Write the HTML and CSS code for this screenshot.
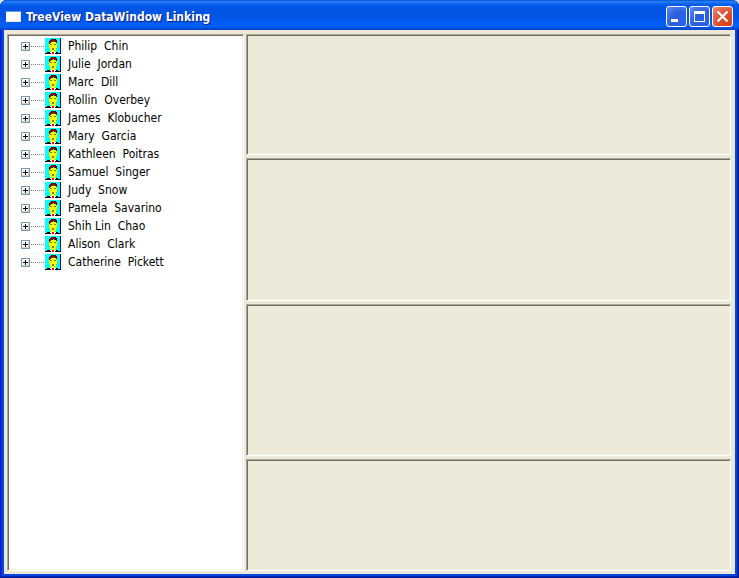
FILE: index.html
```
<!DOCTYPE html>
<html lang="en">
<head>
    <meta charset="UTF-8">
    <meta name="viewport" content="width=device-width, initial-scale=1.0">
    <title>TreeView DataWindow Linking</title>
    <link rel="stylesheet" href="styles.css">
</head>
<body>
    <!-- Shared icons -->
    <svg class="sprites" width="0" height="0" aria-hidden="true">
        <symbol id="person" viewBox="0 0 16 16">
            <path fill="#00ffff" d="M0 0h16v16H0z"/>
            <path fill="#000080" d="M15 0h1v16h-1z"/>
            <path fill="#ffff00" d="M4 4h8v6h-1v3h-1v1H6v-1H5v-3H4z"/>
            <path fill="#800000" d="M6 1h5v1h1v3h-1V4H9V3H8v1H6v1H5v1H4V3h1V2h1z"/>
            <path fill="#808000" d="M5 6h2v1H5zM9 6h2v1H9zM7 10h2v2H7z"/>
            <path fill="#000" d="M2 14h3v1h1v1H0v-1h2zM11 14h2v1h2v1h-5v-1h1z"/>
            <path fill="#fff" d="M5 14h6v1h-1v1H6v-1H5z"/>
            <path fill="#ff0000" d="M7 14h2v2H7z"/>
        </symbol>
        <symbol id="plus" viewBox="0 0 9 9">
            <path fill="#7898b5" d="M0 0h9v9H0z"/>
            <path fill="#fff" d="M1 1h7v7H1z"/>
            <path fill="#d6d2c2" d="M1 7h6V2h1v6H1z"/>
            <path fill="#000" d="M4 2h1v2h2v1H5v2H4V5H2V4h2z"/>
        </symbol>
    </svg>

    <div class="window">
        <header class="title-bar">
            <svg class="app-icon" width="16" height="12" viewBox="0 0 16 12" aria-hidden="true">
                <path fill="#fff" d="M0 0h15v11H0z"/>
                <path fill="#5f9ee8" d="M0 0h15v1H0z"/>
                <path fill="#ece9d8" d="M1 10h13V2h1v9H1z"/>
                <path fill="#e07050" d="M13 0h1v1h-1z"/>
            </svg>
            <h1>TreeView DataWindow Linking</h1>
            <div class="controls">
                <button class="control" type="button" aria-label="Minimize">
                    <svg width="19" height="19" viewBox="0 0 19 19"><path fill="#fff" d="M4 12h7v3H4z"/></svg>
                </button>
                <button class="control" type="button" aria-label="Maximize">
                    <svg width="19" height="19" viewBox="0 0 19 19"><path fill="#fff" fill-rule="evenodd" d="M4 4h11v11H4zM5 7v7h9V7z"/></svg>
                </button>
                <button class="control close" type="button" aria-label="Close">
                    <svg width="19" height="19" viewBox="0 0 19 19"><path stroke="#fff" stroke-width="2.3" d="M4.5 4.5l10 10M14.5 4.5l-10 10"/></svg>
                </button>
            </div>
        </header>

        <main class="client">
            <ul class="tree sunken">
                <li><button type="button" aria-label="Expand"><svg><use href="#plus"/></svg></button><i></i><svg class="person"><use href="#person"/></svg><span>Philip  Chin</span></li>
                <li><button type="button" aria-label="Expand"><svg><use href="#plus"/></svg></button><i></i><svg class="person"><use href="#person"/></svg><span>Julie  Jordan</span></li>
                <li><button type="button" aria-label="Expand"><svg><use href="#plus"/></svg></button><i></i><svg class="person"><use href="#person"/></svg><span>Marc  Dill</span></li>
                <li><button type="button" aria-label="Expand"><svg><use href="#plus"/></svg></button><i></i><svg class="person"><use href="#person"/></svg><span>Rollin  Overbey</span></li>
                <li><button type="button" aria-label="Expand"><svg><use href="#plus"/></svg></button><i></i><svg class="person"><use href="#person"/></svg><span>James  Klobucher</span></li>
                <li><button type="button" aria-label="Expand"><svg><use href="#plus"/></svg></button><i></i><svg class="person"><use href="#person"/></svg><span>Mary  Garcia</span></li>
                <li><button type="button" aria-label="Expand"><svg><use href="#plus"/></svg></button><i></i><svg class="person"><use href="#person"/></svg><span>Kathleen  Poitras</span></li>
                <li><button type="button" aria-label="Expand"><svg><use href="#plus"/></svg></button><i></i><svg class="person"><use href="#person"/></svg><span>Samuel  Singer</span></li>
                <li><button type="button" aria-label="Expand"><svg><use href="#plus"/></svg></button><i></i><svg class="person"><use href="#person"/></svg><span>Judy  Snow</span></li>
                <li><button type="button" aria-label="Expand"><svg><use href="#plus"/></svg></button><i></i><svg class="person"><use href="#person"/></svg><span>Pamela  Savarino</span></li>
                <li><button type="button" aria-label="Expand"><svg><use href="#plus"/></svg></button><i></i><svg class="person"><use href="#person"/></svg><span>Shih Lin  Chao</span></li>
                <li><button type="button" aria-label="Expand"><svg><use href="#plus"/></svg></button><i></i><svg class="person"><use href="#person"/></svg><span>Alison  Clark</span></li>
                <li><button type="button" aria-label="Expand"><svg><use href="#plus"/></svg></button><i></i><svg class="person"><use href="#person"/></svg><span>Catherine  Pickett</span></li>
            </ul>
            <div class="panes">
                <section class="sunken"></section>
                <section class="sunken"></section>
                <section class="sunken"></section>
                <section class="sunken"></section>
            </div>
        </main>
    </div>
</body>
</html>
```
FILE: styles.css
```
* {
    box-sizing: border-box;
}
body {
    margin: 0;
    background-color: #d8e4f8;
    font-family: Tahoma, "DejaVu Sans Condensed", sans-serif;
    font-size: 12px;
    color: #000;
}
.sprites {
    position: absolute;
}
.window {
    display: flex;
    flex-direction: column;
    min-height: 100vh;
    padding: 0 4px 4px;
    border-radius: 7px 7px 0 0;
    background-color: #0046e0;
    box-shadow: inset -1px -1px #00138c, inset 1px 0 #0019cf, inset -2px -2px #0029b8, inset 2px 0 #0831d9;
}

/* Title bar */
.title-bar {
    display: flex;
    align-items: center;
    height: 30px;
    margin: 0 -4px;
    padding: 3px 6px 0;
    border-radius: 7px 7px 0 0;
    background: linear-gradient(#0050d8 0%, #2a80f8 6%, #0560ee 14%, #0054e3 26%, #0055e5 55%, #005cf4 75%, #0060f8 88%, #0050d8 94%, #0042c8 100%);
}
.title-bar h1 {
    flex: 1;
    margin: 0 0 0 4px;
    font-size: 12px;
    line-height: 16px;
    color: #fff;
    text-shadow: 1px 1px #0a1883;
}
.controls {
    display: flex;
    gap: 2px;
}
.control {
    width: 21px;
    height: 21px;
    padding: 0;
    border: 1px solid #fff;
    border-radius: 3px;
    background: radial-gradient(circle at 80% 85%, #2a62f0, #2c5edc 50%, #5c8cf0 100%);
}
.control.close {
    background: radial-gradient(circle at 80% 85%, #d84418, #da5030 50%, #ee9078 100%);
}
.control svg {
    display: block;
}

/* Client area */
.client {
    flex: 1;
    display: grid;
    grid-template-columns: 237px 1fr;
    gap: 2px;
    padding: 4px 4px 3px 3px;
    background-color: #ece9d8;
}
.sunken {
    border: 1px solid;
    border-color: #aca899 #fff #fff #aca899;
    box-shadow: inset 1px 1px #716f64, inset -1px -1px #f1efe2;
}
.panes {
    display: grid;
    grid-template-rows: 121fr 143fr 152fr 112fr;
    gap: 3px;
}

/* Tree */
.tree {
    margin: 0;
    padding: 2px 2px 2px 13px;
    list-style: none;
    background-color: #fff;
}
.tree li {
    display: flex;
    align-items: center;
    height: 18px;
}
.tree button {
    width: 9px;
    height: 9px;
    padding: 0;
    border: 0;
    background: none;
}
.tree button svg {
    display: block;
    width: 9px;
    height: 9px;
}
.tree i {
    width: 15px;
    height: 1px;
    background: repeating-linear-gradient(to right, #fff 0 1px, #808080 1px 2px);
}
.tree .person {
    width: 16px;
    height: 16px;
    shape-rendering: crispEdges;
}
.tree span {
    margin-left: 7px;
    line-height: 18px;
    white-space: pre;
}
```
